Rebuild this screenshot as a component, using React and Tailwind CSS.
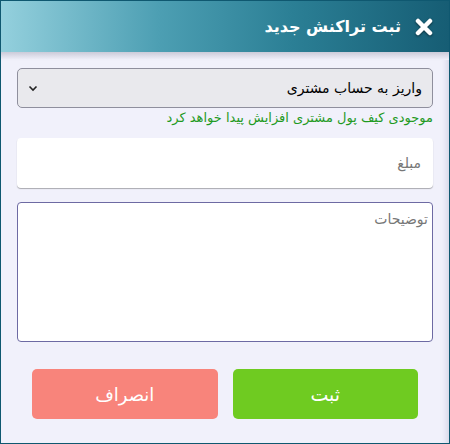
import React from 'react';

const CloseIcon = () => (
  <svg width="18" height="18" viewBox="0 0 18 18" className="drop-shadow-[0_1px_1px_rgba(0,0,0,0.5)]">
    <path d="M3 3 L15 15 M15 3 L3 15" stroke="#fff" strokeWidth="4.5" strokeLinecap="round" />
  </svg>
);

const App = () => {
  return (
    <div
      dir="rtl"
      className="w-[450px] h-[444px] border border-[#0f5870] bg-[#f1f1fb] flex flex-col overflow-hidden font-['DejaVu_Sans',sans-serif]"
    >
      {/* header */}
      <div className="h-[51px] shrink-0 flex items-center gap-[14px] pr-[16px] bg-[linear-gradient(to_right,#94d0dd,#4d9fb3_35%,#2b7f95_65%,#165d74)]">
        <CloseIcon />
        <h1 className="text-white text-[16px] font-bold">ثبت تراکنش جدید</h1>
      </div>
      <div className="h-[8px] shrink-0 bg-[linear-gradient(to_bottom,#cbcbd9,#f1f1fb)]" />

      {/* body */}
      <div className="flex-1 flex flex-col px-[16px] pt-[8px] shadow-[inset_-8px_0_6px_-6px_rgba(120,120,160,0.25)]">
        <div className="h-[40px] rounded-[5px] border border-[#8f8f9d] bg-[#e9e9ed] flex items-center justify-between px-[10px]">
          <span className="text-[14px] text-black">واریز به حساب مشتری</span>
          <svg width="10" height="7" viewBox="0 0 10 7">
            <path d="M1.5 1.5 L5 5 L8.5 1.5" fill="none" stroke="#222" strokeWidth="1.6" />
          </svg>
        </div>
        <p className="text-[13px] text-[#1f9a1f] leading-[20px]">موجودی کیف پول مشتری افزایش پیدا خواهد کرد</p>

        <div className="mt-[10px] h-[50px] rounded-[4px] bg-white shadow-[0_1px_1px_rgba(0,0,0,0.3)] flex items-center px-[12px]">
          <span className="text-[14px] text-[#777]">مبلغ</span>
        </div>

        <div className="mt-[14px] h-[140px] rounded-[4px] bg-white border border-[#6d6aa3] px-[4px] pt-[4px]">
          <span className="text-[14px] text-[#777]">توضیحات</span>
        </div>

        <div className="mt-[27px] flex gap-[15px] px-[15px]">
          <button className="flex-1 h-[50px] rounded-[5px] bg-[#6fcb21] text-white text-[19px]">ثبت</button>
          <button className="flex-1 h-[50px] rounded-[5px] bg-[#f8847b] text-white text-[18px]">انصراف</button>
        </div>
      </div>
    </div>
  );
};

export default App;
